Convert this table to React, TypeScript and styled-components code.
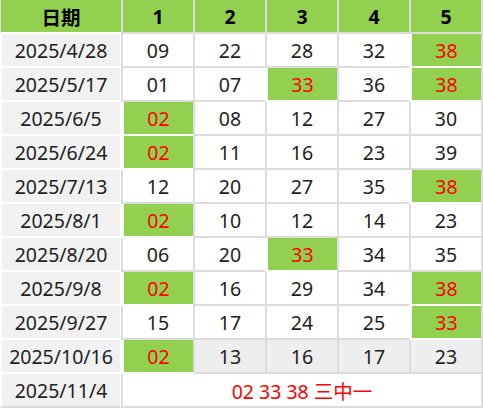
import * as React from "react";
import styled, { createGlobalStyle, css } from "styled-components";

const GlobalStyle = createGlobalStyle`
  body {
    margin: 0;
    background: #ffffff;
    font-family: "Noto Sans", "Open Sans", "Noto Sans CJK SC", sans-serif;
  }
`;

type Kind = "head" | "headDate" | "date" | "num" | "hit" | "dim" | "note";

const Grid = styled.div`
  display: grid;
  grid-template-columns: 121px repeat(5, 72px);
  grid-auto-rows: 34px;
  width: 483px;
  box-sizing: border-box;
  border-right: 2px solid #dcdcdc;
`;

const Cell = styled.div<{ $kind: Kind; $last?: boolean }>`
  display: flex;
  align-items: center;
  justify-content: center;
  box-sizing: border-box;
  font-size: 19.5px;
  color: #222;
  border-left: 2px solid #dcdcdc;
  border-bottom: 2px solid #dcdcdc;
  background: #ffffff;

  ${(p) =>
    p.$kind === "headDate" &&
    css`
      background: #92d050;
      color: #000;
      font-weight: 700;
      border-left: 1px solid #dcdcdc;
      border-bottom-color: #ffffff;
    `}
  ${(p) =>
    p.$kind === "head" &&
    css`
      background: #92d050;
      color: #000;
      font-weight: 700;
    `}
  ${(p) =>
    p.$kind === "date" &&
    css`
      background: #f1f1f1;
      border-left: 2px solid #ffffff;
      border-right: 1px solid #ffffff;
      border-bottom-color: ${p.$last ? "#dcdcdc" : "#ffffff"};
    `}
  ${(p) =>
    p.$kind === "hit" &&
    css`
      background: #92d050;
      color: #ff0000;
      border-left: 3px solid #ffffff;
      border-bottom-color: #ffffff;
    `}
  ${(p) =>
    p.$kind === "dim" &&
    css`
      background: #eeeeee;
    `}
  ${(p) =>
    p.$kind === "note" &&
    css`
      grid-column: span 5;
      color: #ff0000;
    `}
`;

const hits = new Set(["02", "33", "38"]);

const rows: { date: string; nums: string[] }[] = [
  { date: "2025/4/28", nums: ["09", "22", "28", "32", "38"] },
  { date: "2025/5/17", nums: ["01", "07", "33", "36", "38"] },
  { date: "2025/6/5", nums: ["02", "08", "12", "27", "30"] },
  { date: "2025/6/24", nums: ["02", "11", "16", "23", "39"] },
  { date: "2025/7/13", nums: ["12", "20", "27", "35", "38"] },
  { date: "2025/8/1", nums: ["02", "10", "12", "14", "23"] },
  { date: "2025/8/20", nums: ["06", "20", "33", "34", "35"] },
  { date: "2025/9/8", nums: ["02", "16", "29", "34", "38"] },
  { date: "2025/9/27", nums: ["15", "17", "24", "25", "33"] },
  { date: "2025/10/16", nums: ["02", "13", "16", "17", "23"] },
];

export default function App() {
  return (
    <>
      <GlobalStyle />
      <Grid>
        <Cell $kind="headDate">日期</Cell>
        {["1", "2", "3", "4", "5"].map((h) => (
          <Cell key={h} $kind="head">
            {h}
          </Cell>
        ))}
        {rows.map((r, ri) => (
          <React.Fragment key={r.date}>
            <Cell $kind="date">{r.date}</Cell>
            {r.nums.map((n, i) => (
              <Cell
                key={i}
                $kind={hits.has(n) ? "hit" : ri === rows.length - 1 ? "dim" : "num"}
              >
                {n}
              </Cell>
            ))}
          </React.Fragment>
        ))}
        <Cell $kind="date" $last>
          2025/11/4
        </Cell>
        <Cell $kind="note">02 33 38 三中一</Cell>
      </Grid>
    </>
  );
}
